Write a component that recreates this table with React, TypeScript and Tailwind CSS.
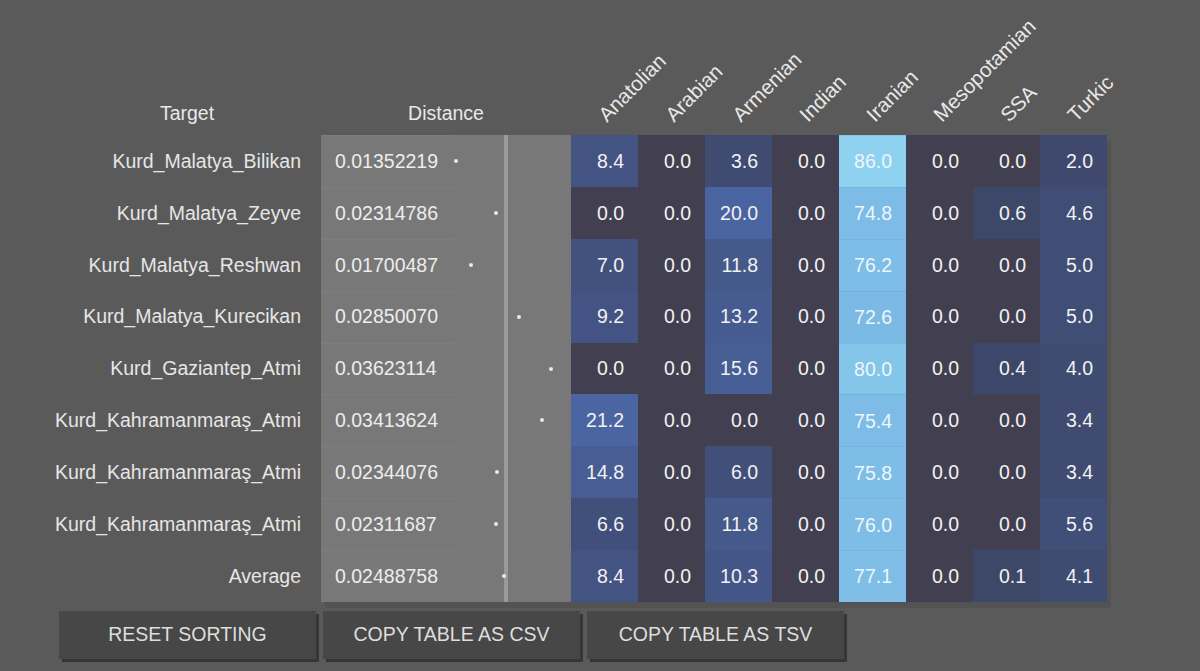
import React from "react";

type Row = { name: string; dist: number; distText: string; vals: number[] };

const cols = ["Anatolian", "Arabian", "Armenian", "Indian", "Iranian", "Mesopotamian", "SSA", "Turkic"];

const rows: Row[] = [
  { name: "Kurd_Malatya_Bilikan", dist: 0.01352219, distText: "0.01352219", vals: [8.4, 0.0, 3.6, 0.0, 86.0, 0.0, 0.0, 2.0] },
  { name: "Kurd_Malatya_Zeyve", dist: 0.02314786, distText: "0.02314786", vals: [0.0, 0.0, 20.0, 0.0, 74.8, 0.0, 0.6, 4.6] },
  { name: "Kurd_Malatya_Reshwan", dist: 0.01700487, distText: "0.01700487", vals: [7.0, 0.0, 11.8, 0.0, 76.2, 0.0, 0.0, 5.0] },
  { name: "Kurd_Malatya_Kurecikan", dist: 0.0285007, distText: "0.02850070", vals: [9.2, 0.0, 13.2, 0.0, 72.6, 0.0, 0.0, 5.0] },
  { name: "Kurd_Gaziantep_Atmi", dist: 0.03623114, distText: "0.03623114", vals: [0.0, 0.0, 15.6, 0.0, 80.0, 0.0, 0.4, 4.0] },
  { name: "Kurd_Kahramanmaraş_Atmi", dist: 0.03413624, distText: "0.03413624", vals: [21.2, 0.0, 0.0, 0.0, 75.4, 0.0, 0.0, 3.4] },
  { name: "Kurd_Kahramanmaraş_Atmi", dist: 0.02344076, distText: "0.02344076", vals: [14.8, 0.0, 6.0, 0.0, 75.8, 0.0, 0.0, 3.4] },
  { name: "Kurd_Kahramanmaraş_Atmi", dist: 0.02311687, distText: "0.02311687", vals: [6.6, 0.0, 11.8, 0.0, 76.0, 0.0, 0.0, 5.6] },
  { name: "Average", dist: 0.02488758, distText: "0.02488758", vals: [8.4, 0.0, 10.3, 0.0, 77.1, 0.0, 0.1, 4.1] },
];

const stops: [number, number[]][] = [
  [0.01, [61, 71, 104]],
  [4, [63, 76, 114]],
  [8.4, [67, 83, 130]],
  [12, [69, 89, 140]],
  [21, [74, 101, 162]],
  [72, [122, 185, 228]],
  [77, [127, 190, 231]],
  [86, [143, 210, 239]],
];

function cellColor(v: number): string {
  if (v === 0) return "rgb(66,63,80)";
  if (v <= stops[0][0]) return `rgb(${stops[0][1].join(",")})`;
  for (let i = 1; i < stops.length; i++) {
    const [x1, c1] = stops[i];
    const [x0, c0] = stops[i - 1];
    if (v <= x1) {
      const t = (v - x0) / (x1 - x0);
      const c = c0.map((a, k) => Math.round(a + (c1[k] - a) * t));
      return `rgb(${c.join(",")})`;
    }
  }
  return `rgb(${stops[stops.length - 1][1].join(",")})`;
}

function Button({ label }: { label: string }) {
  return (
    <div className="w-[257px] h-[48px] bg-[#474747] shadow-[3px_3px_0_#363636] flex items-center justify-center text-[19.5px] text-[#dedede] uppercase">
      {label}
    </div>
  );
}

export default function App() {
  return (
    <div
      className="w-[1200px] min-h-[671px] bg-[#5a5a5a] text-[#ececec] overflow-hidden"
      style={{ fontFamily: '"Liberation Sans", Arial, sans-serif' }}
    >
      <div className="pl-[53px]">
        {/* header */}
        <div className="flex h-[135px] items-end">
          <div className="w-[268px] text-center text-[19.5px] leading-[22px] pb-[11px] text-[#e8e8e8]">Target</div>
          <div className="w-[250px] text-center text-[19.5px] leading-[22px] pb-[11px] text-[#e8e8e8]">Distance</div>
          {cols.map((c) => (
            <div key={c} className="w-[67px] h-full flex items-end pl-[38px] pb-[10px]">
              <span className="shrink-0 whitespace-nowrap text-[20.5px] leading-[20px] origin-bottom-left -rotate-45 text-[#e8e8e8]">
                {c}
              </span>
            </div>
          ))}
        </div>
        {/* body */}
        <div className="flex">
          <div className="w-[268px] flex flex-col">
            {rows.map((r, i) => (
              <div key={i} className="h-[51.9px] flex items-center justify-end pr-[20px] pt-[1px] text-[19.5px] text-[#e6e6e6]">
                {r.name}
              </div>
            ))}
          </div>
          <div className="flex shadow-[4px_6px_0_rgba(0,0,0,0.07)]">
            <div className="w-[250px] bg-[#787878] flex flex-col">
              {rows.map((r, i) => (
                <div key={i} className="relative h-[51.9px] flex items-center pl-[14px] pt-[1px] text-[19.5px] text-[#ededed]">
                  <div className="absolute top-0 left-0 w-[134px] h-px bg-[#7d7d7d]" />
                  <div className="absolute top-0 bottom-0 left-[183px] w-[4px] bg-[#9a9a9a]" />
                  <span>{r.distText}</span>
                  <div
                    className="absolute w-[4px] h-[4px] rounded-full bg-[#e8e8e8] top-[24px]"
                    style={{ left: `${78.4 + 4183 * r.dist - 2}px` }}
                  />
                </div>
              ))}
            </div>
            <div className="flex flex-col">
              {rows.map((r, i) => (
                <div key={i} className="flex">
                  {r.vals.map((v, j) => (
                    <div
                      key={j}
                      className={`w-[67px] h-[51.9px] flex items-center justify-end pr-[14px] pt-[1px] text-[19.5px] ${
                        v > 60 ? "text-[#eef6fb] border-t border-[rgba(0,0,0,0.05)]" : "text-[#f2f2f2]"
                      }`}
                      style={{ backgroundColor: cellColor(v) }}
                    >
                      {v.toFixed(1)}
                    </div>
                  ))}
                </div>
              ))}
            </div>
          </div>
        </div>
        {/* buttons */}
        <div className="flex gap-[7px] mt-[9px] ml-[6px]">
          <Button label="Reset sorting" />
          <Button label="Copy table as CSV" />
          <Button label="Copy table as TSV" />
        </div>
      </div>
    </div>
  );
}
